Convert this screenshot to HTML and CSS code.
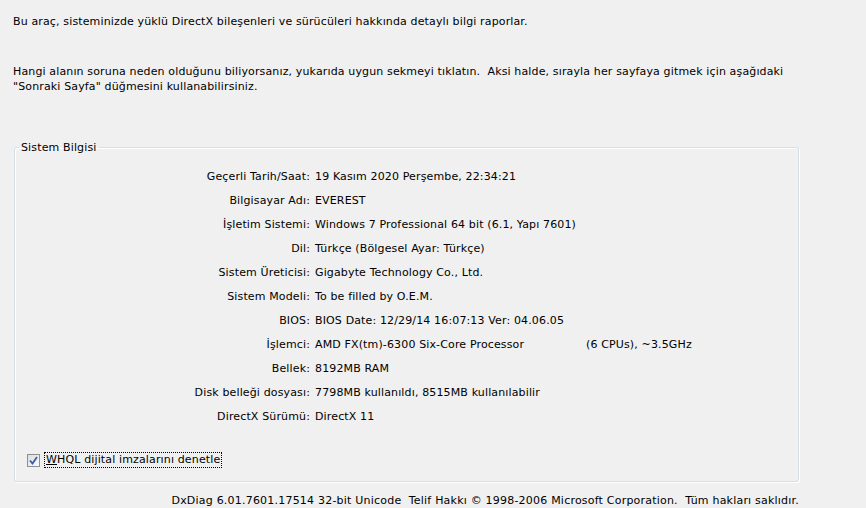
FILE: index.html
```html
<!DOCTYPE html>
<html lang="tr">
<head>
<meta charset="utf-8">
<title>DirectX Tanı Aracı</title>
<link rel="stylesheet" href="styles.css">
</head>
<body>
<div class="page">
  <p class="intro">Bu araç, sisteminizde yüklü DirectX bileşenleri ve sürücüleri hakkında detaylı bilgi raporlar.</p>
  <p class="hint">Hangi alanın soruna neden olduğunu biliyorsanız, yukarıda uygun sekmeyi tıklatın.&nbsp; Aksi halde, sırayla her sayfaya gitmek için aşağıdaki<br>"Sonraki Sayfa" düğmesini kullanabilirsiniz.</p>
  <fieldset class="group">
    <legend>Sistem Bilgisi</legend>
    <div class="info">
      <span class="k">Geçerli Tarih/Saat:</span><span class="v">19 Kasım 2020 Perşembe, 22:34:21</span>
      <span class="k">Bilgisayar Adı:</span><span class="v">EVEREST</span>
      <span class="k">İşletim Sistemi:</span><span class="v">Windows 7 Professional 64 bit (6.1, Yapı 7601)</span>
      <span class="k">Dil:</span><span class="v">Türkçe (Bölgesel Ayar: Türkçe)</span>
      <span class="k">Sistem Üreticisi:</span><span class="v">Gigabyte Technology Co., Ltd.</span>
      <span class="k">Sistem Modeli:</span><span class="v">To be filled by O.E.M.</span>
      <span class="k">BIOS:</span><span class="v">BIOS Date: 12/29/14 16:07:13 Ver: 04.06.05</span>
      <span class="k">İşlemci:</span><span class="v cpu"><span class="cpu-name">AMD FX(tm)-6300 Six-Core Processor</span><span>(6 CPUs), ~3.5GHz</span></span>
      <span class="k">Bellek:</span><span class="v">8192MB RAM</span>
      <span class="k">Disk belleği dosyası:</span><span class="v">7798MB kullanıldı, 8515MB kullanılabilir</span>
      <span class="k">DirectX Sürümü:</span><span class="v">DirectX 11</span>
    </div>
    <label class="check">
      <span class="box"><svg width="9" height="9" viewBox="0 0 9 9"><path d="M1 4.5 L3.5 7.5 L8 1" fill="none" stroke="#3a5da5" stroke-width="1.8"/></svg></span>
      <span class="check-label"><u>W</u>HQL dijital imzalarını denetle</span>
    </label>
  </fieldset>
  <p class="footer">DxDiag 6.01.7601.17514 32-bit Unicode&nbsp; Telif Hakkı © 1998-2006 Microsoft Corporation.&nbsp; Tüm hakları saklıdır.</p>
</div>
</body>
</html>
```
FILE: styles.css
```css
html, body {
  margin: 0;
  padding: 0;
  background: #f0f0f0;
}
body {
  font-family: "DejaVu Sans", sans-serif;
  font-size: 11px;
  letter-spacing: 0.14px;
  line-height: 15px;
  color: #000;
  width: 866px;
  height: 508px;
  overflow: hidden;
}
.page {
  padding: 14px 0 0 13px;
}
.intro {
  margin: 0;
}
.hint {
  margin: 35px 0 0 0;
}
.group {
  margin: 46px 0 0 1px;
  width: 785px;
  box-sizing: border-box;
  padding: 9px 0 0 0;
  height: 342px;
  border: 1px solid #d5dfe5;
  border-radius: 3px;
  box-shadow: inset 1px 1px 0 #fff, 1px 1px 0 #fff;
}
.group legend {
  margin-left: 4px;
  padding: 0 2px;
  line-height: 15px;
}
.info {
  display: grid;
  grid-template-columns: 295px auto;
  column-gap: 5px;
  grid-auto-rows: 24px;
  align-items: center;
}
.k {
  text-align: right;
}
.v {
  white-space: nowrap;
}
.cpu {
  display: flex;
}
.cpu-name {
  width: 271px;
}
.check {
  display: flex;
  align-items: center;
  gap: 5px;
  margin: 25px 0 0 12px;
}
.box {
  width: 11px;
  height: 11px;
  border: 1px solid #8e8f8f;
  background: linear-gradient(135deg, #dcdcdc, #fbfbfb);
  display: flex;
  align-items: center;
  justify-content: center;
}
.check-label {
  outline: 1px dotted #000;
  line-height: 14px;
  padding: 0 1px;
}
.footer {
  margin: 11px 0 0 0;
  width: 786px;
  text-align: right;
  letter-spacing: 0.21px;
}
```
